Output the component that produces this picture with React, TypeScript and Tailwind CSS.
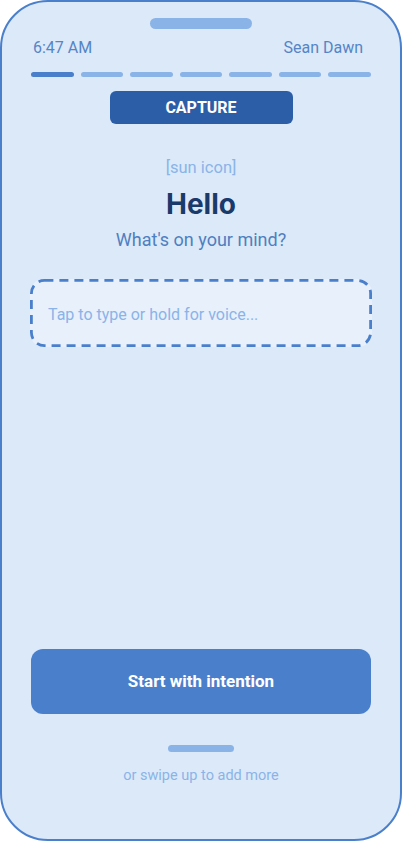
import React from "react";

export default function App() {
  const segs = [0, 1, 2, 3, 4, 5, 6];
  return (
    <div className="w-[402px] h-[841px] bg-white" style={{ fontFamily: "Roboto, 'Noto Sans', sans-serif" }}>
      <div className="w-full h-full rounded-[48px] border-2 border-[#4a7fcb] bg-[#dce9f8] flex flex-col items-center px-[28px] overflow-hidden">
        <div className="mt-[16px] w-[102px] h-[11px] rounded-full bg-[#8ab4e8]" />
        <div className="w-full flex justify-between items-center mt-[9px] pl-[3px] pr-[9px] text-[16px] leading-[20px] text-[#5585c6]">
          <span>6:47 AM</span>
          <span>Sean Dawn</span>
        </div>
        <div className="w-full flex gap-[7px] mt-[14px] px-[1px]">
          {segs.map((i) => (
            <div key={i} className={"flex-1 h-[5px] rounded-full " + (i === 0 ? "bg-[#4a7fcb]" : "bg-[#8ab4e8]")} />
          ))}
        </div>
        <div className="mt-[14px] w-[183px] h-[33px] shrink-0 rounded-[6px] bg-[#2c5ea8] flex items-center justify-center text-white font-bold text-[16px]">
          CAPTURE
        </div>
        <div className="mt-[33px] text-[16.5px] leading-[22px] text-[#8ab4e8]">[sun icon]</div>
        <div className="mt-[8px] text-[28px] leading-[34px] font-bold text-[#1a3a6b]" style={{ fontFamily: "Inter, Roboto, sans-serif" }}>Hello</div>
        <div className="mt-[7px] text-[18px] leading-[24px] text-[#4f7fc0]">What's on your mind?</div>
        <div className="relative mt-[27px] w-full h-[68px] shrink-0 rounded-[14px] bg-[#e8f0fc] flex items-center px-[18px] pt-[3px] text-[16px] text-[#8ab4e8]">
          <svg className="absolute inset-0" width="342" height="68" viewBox="0 0 342 68" fill="none">
            <rect x="1.4" y="1.4" width="339.2" height="65.2" rx="13" stroke="#4a7fcb" strokeWidth="2.8" strokeDasharray="9 6" />
          </svg>
          <span className="relative">Tap to type or hold for voice...</span>
        </div>
        <div className="flex-1" />
        <div className="w-[340px] h-[65px] shrink-0 rounded-[12px] bg-[#4a7fcb] flex items-center justify-center text-white font-bold text-[17px]">
          Start with intention
        </div>
        <div className="mt-[31px] w-[66px] h-[7px] rounded-full bg-[#8ab4e8]" />
        <div className="mt-[15px] mb-[54px] text-[14.5px] leading-[18px] text-[#8ab4e8]">or swipe up to add more</div>
      </div>
    </div>
  );
}
